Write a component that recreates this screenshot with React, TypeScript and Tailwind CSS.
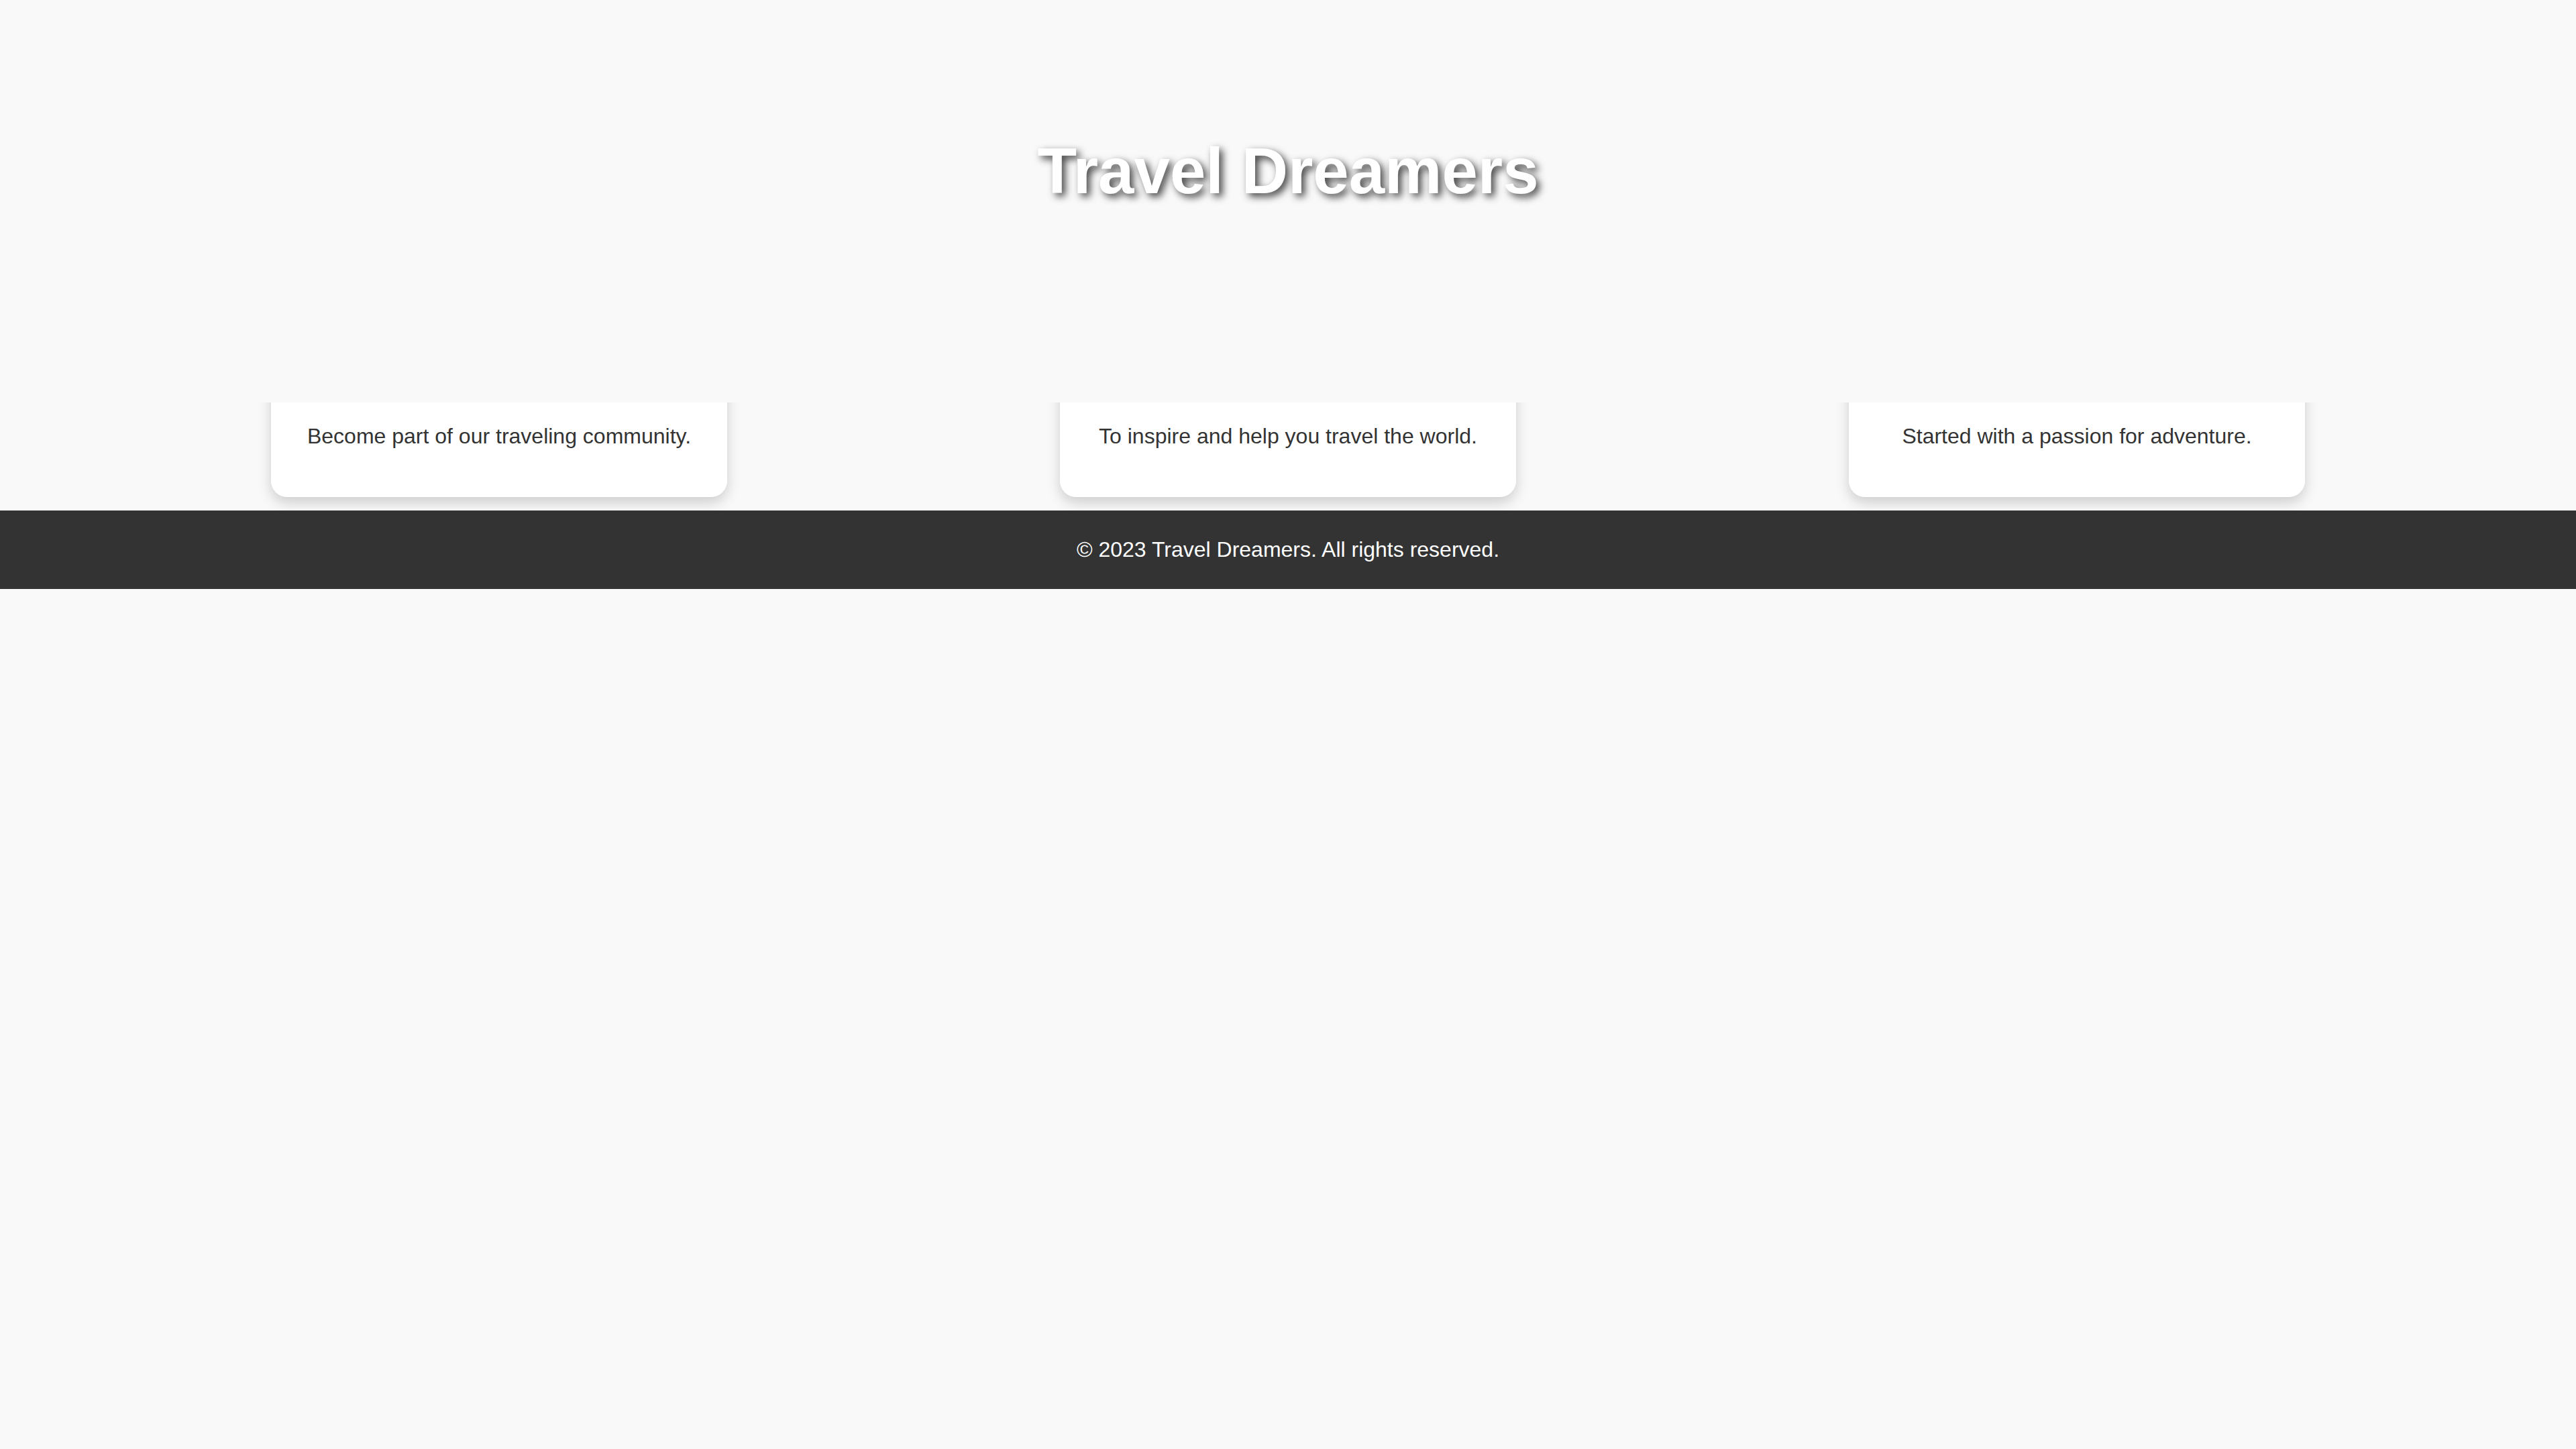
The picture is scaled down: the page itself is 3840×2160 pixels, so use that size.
import React from "react";

const cards = [
  "Become part of our traveling community.",
  "To inspire and help you travel the world.",
  "Started with a passion for adventure.",
];

export default function App() {
  return (
    <div className="min-h-screen bg-[#f9f9f9] font-['Liberation_Sans',Arial,sans-serif]">
      <header className="relative z-10 h-[600px] bg-[#f9f9f9] pt-[200px] text-center">
        <h1 className="text-[96px] font-bold leading-[normal] text-white [text-shadow:5px_5px_12px_rgba(0,0,0,0.75)]">
          Travel Dreamers
        </h1>
      </header>
      <section className="-mt-[60px] flex justify-between px-[404px] pb-[20px]">
        {cards.map((t) => (
          <div
            key={t}
            className="w-[680px] rounded-[24px] bg-white px-[40px] pb-[72px] pt-[92px] text-center shadow-[0_8px_20px_rgba(0,0,0,0.18)]"
          >
            <p className="text-[32px] leading-[normal] text-[#333333]">{t}</p>
          </div>
        ))}
      </section>
      <footer className="bg-[#333333] py-[40px] text-center text-[32px] leading-[normal] text-white">
        © 2023 Travel Dreamers. All rights reserved.
      </footer>
    </div>
  );
}
